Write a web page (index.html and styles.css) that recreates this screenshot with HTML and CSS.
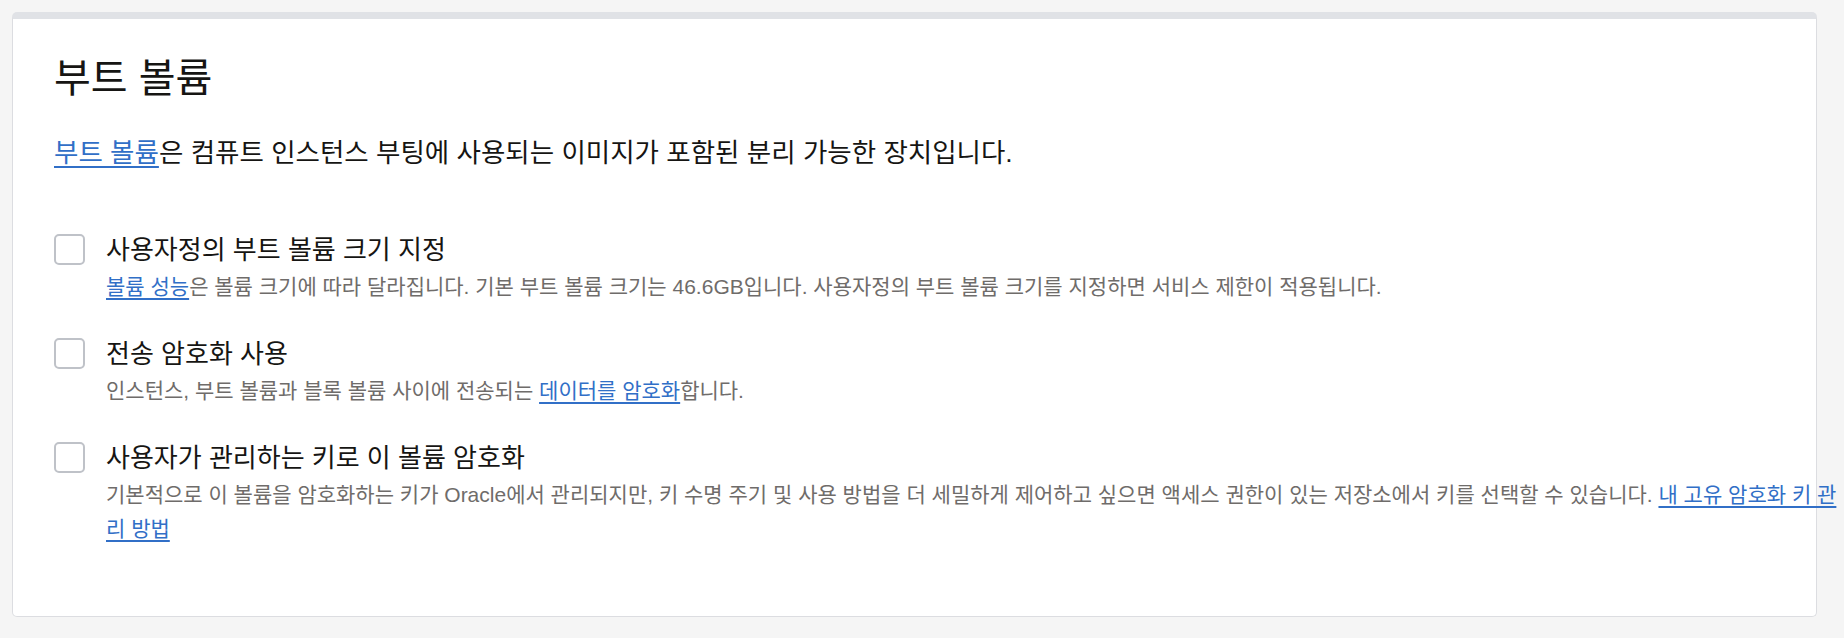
FILE: index.html
```html
<!DOCTYPE html>
<html lang="ko">
<head>
    <meta charset="UTF-8">
    <meta name="viewport" content="width=device-width, initial-scale=1.0">
    <title>부트 볼륨</title>
    <link rel="stylesheet" href="styles.css">
</head>
<body>
    <div class="panel">
        <h1 class="panel-title">부트 볼륨</h1>
        <p class="panel-desc"><a href="#">부트 볼륨</a>은 컴퓨트 인스턴스 부팅에 사용되는 이미지가 포함된 분리 가능한 장치입니다.</p>

        <div class="option-list">
            <label class="option">
                <input type="checkbox" class="option-check">
                <span class="option-body">
                    <span class="option-label">사용자정의 부트 볼륨 크기 지정</span>
                    <span class="option-help"><a href="#">볼륨 성능</a>은 볼륨 크기에 따라 달라집니다. 기본 부트 볼륨 크기는 46.6GB입니다. 사용자정의 부트 볼륨 크기를 지정하면 서비스 제한이 적용됩니다.</span>
                </span>
            </label>
            <label class="option">
                <input type="checkbox" class="option-check">
                <span class="option-body">
                    <span class="option-label">전송 암호화 사용</span>
                    <span class="option-help">인스턴스, 부트 볼륨과 블록 볼륨 사이에 전송되는 <a href="#">데이터를 암호화</a>합니다.</span>
                </span>
            </label>
            <label class="option">
                <input type="checkbox" class="option-check">
                <span class="option-body option-body-wide">
                    <span class="option-label">사용자가 관리하는 키로 이 볼륨 암호화</span>
                    <span class="option-help">기본적으로 이 볼륨을 암호화하는 키가 Oracle에서 관리되지만, 키 수명 주기 및 사용 방법을 더 세밀하게 제어하고 싶으면 액세스 권한이 있는 저장소에서 키를 선택할 수 있습니다. <a href="#">내 고유 암호화 키 관리 방법</a></span>
                </span>
            </label>
        </div>
    </div>
</body>
</html>
```

FILE: styles.css
```css
html, body {
    margin: 0;
    background-color: #f5f5f5;
}
body {
    font-family: "Liberation Sans", "Noto Sans CJK KR", sans-serif;
    color: #161513;
    padding: 12px 27px 0 12px;
    overflow: hidden;
}
a {
    color: #316fc7;
    text-decoration: underline;
    text-decoration-thickness: 2px;
    text-underline-offset: 4px;
}
.panel {
    background-color: #fff;
    border: 1px solid #dcdde1;
    border-top: 7px solid #e0e2e6;
    border-radius: 5px;
    height: 605px;
    padding: 35px 0 0 41px;
    box-sizing: border-box;
}
.panel-title {
    margin: 0 0 34px;
    font-size: 40px;
    line-height: 48px;
    font-weight: 400;
}
.panel-desc {
    margin: 0 0 64px;
    font-size: 26.5px;
    line-height: 34px;
}
.option-list {
    display: flex;
    flex-direction: column;
    gap: 34px;
}
.option {
    display: flex;
    gap: 21px;
    align-items: flex-start;
}
.option-check {
    appearance: none;
    margin: 0;
    flex: none;
    width: 31px;
    height: 31px;
    border: 2px solid #bfc2c8;
    border-radius: 5px;
    background-color: #fff;
}
.option-body {
    display: flex;
    flex-direction: column;
}
.option-body-wide {
    margin-right: -30px;
}
.option-label {
    font-size: 26px;
    line-height: 32px;
}
.option-help {
    margin-top: 4px;
    font-size: 21px;
    line-height: 34px;
    color: #6f6c6a;
}
```
